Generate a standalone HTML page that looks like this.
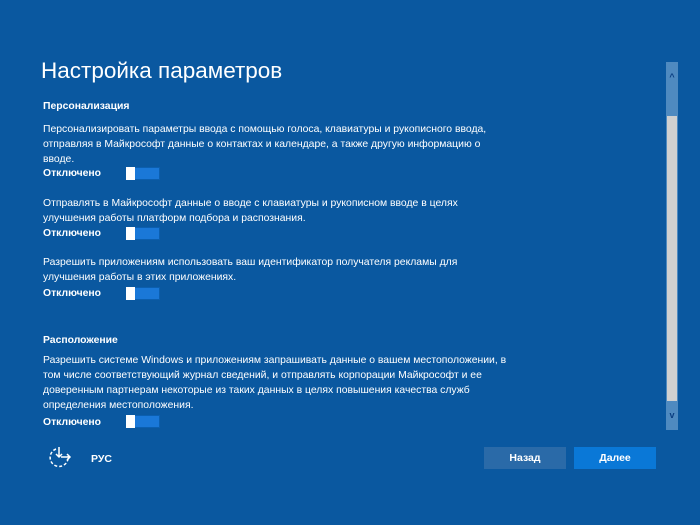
<!DOCTYPE html>
<html><head><meta charset="utf-8"><style>
body{margin:0;width:700px;height:525px;background:#0a58a0;font-family:"Liberation Sans","DejaVu Sans",sans-serif;color:#fff;overflow:hidden;position:relative}
.a{position:absolute;left:43px;font-size:10.4px;line-height:15px;white-space:nowrap}
.b{font-weight:bold}
.h{position:absolute;left:41px;top:58px;font-size:22.5px;font-weight:300}
.t{position:absolute;left:126px;width:34px;height:13px;background:#1a78d8;box-sizing:border-box;border:1px solid #0b5fb0}
.t:before{content:"";position:absolute;left:-1px;top:-1px;width:9px;height:13px;background:#fff}
.btn{position:absolute;top:447px;width:82px;height:22px;font-size:10.5px;font-weight:bold;text-align:center;line-height:22px}
</style></head><body>
<div class="h">Настройка параметров</div>
<div class="a b" style="top:99px">Персонализация</div>
<div class="a" style="top:122px">Персонализировать параметры ввода с помощью голоса, клавиатуры и рукописного ввода,<br>отправляя в Майкрософт данные о контактах и календаре, а также другую информацию о<br>вводе.</div>
<div class="a b" style="top:166px">Отключено</div><div class="t" style="top:167px"></div>
<div class="a" style="top:196px">Отправлять в Майкрософт данные о вводе с клавиатуры и рукописном вводе в целях<br>улучшения работы платформ подбора и распознания.</div>
<div class="a b" style="top:226px">Отключено</div><div class="t" style="top:227px"></div>
<div class="a" style="top:255px">Разрешить приложениям использовать ваш идентификатор получателя рекламы для<br>улучшения работы в этих приложениях.</div>
<div class="a b" style="top:286px">Отключено</div><div class="t" style="top:287px"></div>
<div class="a b" style="top:333px">Расположение</div>
<div class="a" style="top:353px">Разрешить системе Windows и приложениям запрашивать данные о вашем местоположении, в<br>том числе соответствующий журнал сведений, и отправлять корпорации Майкрософт и ее<br>доверенным партнерам некоторые из таких данных в целях повышения качества служб<br>определения местоположения.</div>
<div class="a b" style="top:415px">Отключено</div><div class="t" style="top:415px"></div>
<div style="position:absolute;left:666px;top:62px;width:12px;height:368px;background:#4f8ac0"></div>
<div style="position:absolute;left:667px;top:116px;width:10px;height:285px;background:#d0d0d0"></div>
<div style="position:absolute;left:666px;top:72px;width:12px;text-align:center;font-size:9px;color:#0a3d80;font-weight:bold">^</div>
<div style="position:absolute;left:666px;top:410px;width:12px;text-align:center;font-size:9px;color:#0a3d80;font-weight:bold">v</div>
<svg style="position:absolute;left:46px;top:444px" width="28" height="26" viewBox="0 0 28 26" fill="none" stroke="#fff" stroke-width="1.5">
<path d="M10 5 A9 9 0 1 0 22 12" stroke-dasharray="3 2"/><path d="M13 3 V13 M10 10 L13 13 L16 10 M15 13 H24 M21 10 L24 13 L21 16"/></svg>
<div style="position:absolute;left:91px;top:453px;font-size:10.5px;font-weight:bold">РУС</div>
<div class="btn" style="left:484px;background:#2a6aa8">Назад</div>
<div class="btn" style="left:574px;background:#0a78d7">Далее</div>
</body></html>
